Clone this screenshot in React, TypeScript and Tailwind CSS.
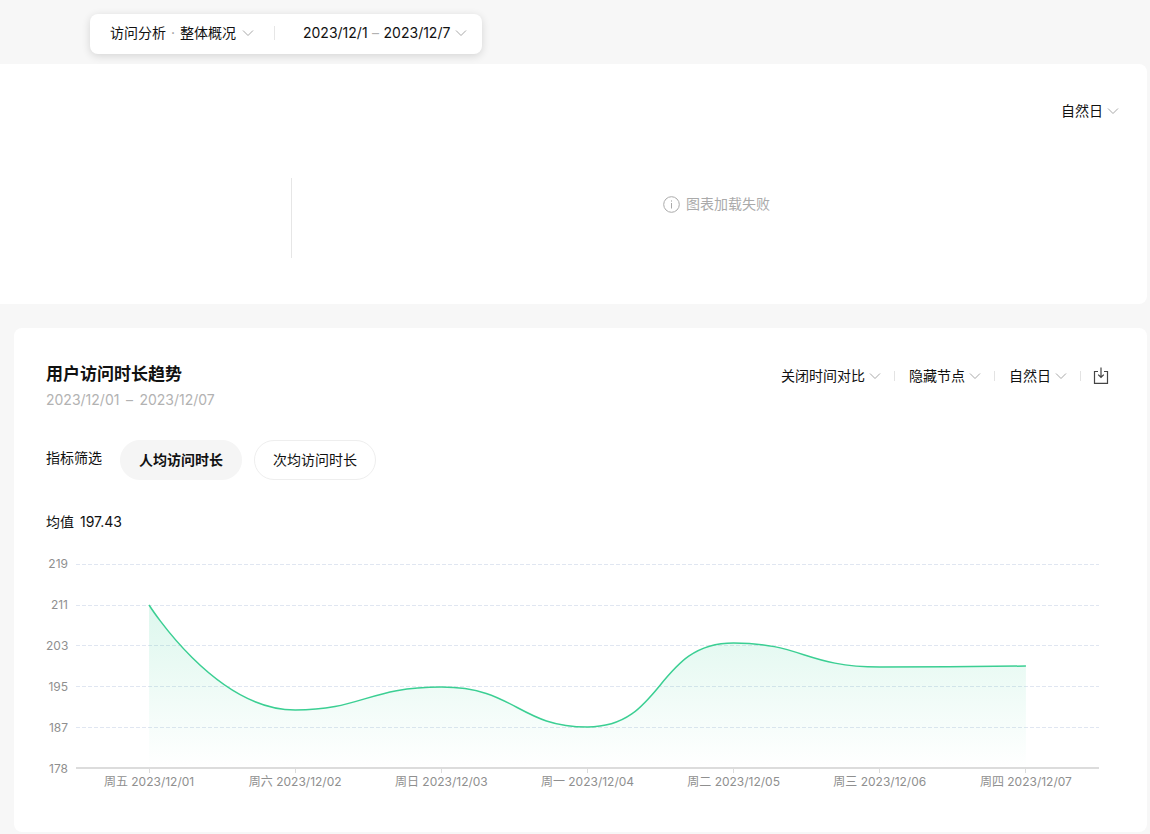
import { useState } from 'react';

const PLOT_WIDTH = 1023;
const PLOT_HEIGHT = 210;
const BASELINE = 204;

const yTicks = [219, 211, 203, 195, 187, 178];
const gridLines = [0, 41, 81, 122, 163];

const series = [
  { day: '周五 2023/12/01', y: 41 },
  { day: '周六 2023/12/02', y: 146 },
  { day: '周日 2023/12/03', y: 123 },
  { day: '周一 2023/12/04', y: 163 },
  { day: '周二 2023/12/05', y: 79 },
  { day: '周三 2023/12/06', y: 103 },
  { day: '周四 2023/12/07', y: 102 },
];

const step = PLOT_WIDTH / series.length;
const points = series.map((item, i) => ({ x: step * (i + 0.5), y: item.y }));

// Handles stay horizontal at every point, so the curve never overshoots the data
function buildLine() {
  const lengths = points.slice(1).map((p, i) => Math.hypot(p.x - points[i].x, p.y - points[i].y));
  let path = `M${points[0].x} ${points[0].y}`;
  for (let i = 1; i < points.length; i++) {
    const from = points[i - 1];
    const to = points[i];
    const out = i === 1 ? 0 : (step * lengths[i - 1]) / (lengths[i - 2] + lengths[i - 1]);
    const into = i === points.length - 1 ? 0 : (step * lengths[i - 1]) / (lengths[i - 1] + lengths[i]);
    path += ` C${from.x + out} ${from.y} ${to.x - into} ${to.y} ${to.x} ${to.y}`;
  }
  return path;
}

const linePath = buildLine();
const areaPath = `${linePath} V${BASELINE} H${points[0].x} Z`;

function Chevron() {
  return (
    <svg className="w-3 h-2 shrink-0 pointer-events-none text-[#a8a8a8]" viewBox="0 0 12 8" fill="none" stroke="currentColor" aria-hidden="true">
      <path d="M1 1.5l5 5 5-5" />
    </svg>
  );
}

function Divider() {
  return <span className="-ml-px w-px h-2.5 bg-[#e3e3e3]" />;
}

type DropdownProps = {
  label: string;
  options: string[];
};

function Dropdown({ label, options }: DropdownProps) {
  return (
    <label className="flex items-center gap-1">
      <select aria-label={label} className="appearance-none bg-transparent text-sm leading-5 outline-none cursor-pointer">
        {options.map((option) => (
          <option key={option}>{option}</option>
        ))}
      </select>
      <Chevron />
    </label>
  );
}

function Toolbar() {
  return (
    <header className="flex h-16 items-center pl-[90px] pt-1">
      <div className="flex h-10 items-center rounded-lg bg-white pl-5 pr-[15px] pb-0.5 text-sm leading-5 shadow-[0_2px_8px_rgba(0,0,0,0.14)]">
        <button type="button" className="flex items-center cursor-pointer">
          <span>访问分析</span>
          <span className="w-3.5 text-center text-[#999999]">·</span>
          <span className="mr-1.5">整体概况</span>
          <Chevron />
        </button>
        <span className="ml-5 mr-7 w-px h-3.5 bg-[#e6e6e6]" />
        <button type="button" className="flex items-center cursor-pointer">
          <span>2023/12/1</span>
          <span className="w-4 text-center text-[#b2b2b2]">–</span>
          <span className="mr-[5px]">2023/12/7</span>
          <Chevron />
        </button>
      </div>
    </header>
  );
}

function OverviewCard() {
  return (
    <section className="h-60 rounded-r-lg bg-white pt-[37px]">
      <div className="flex justify-end pr-7">
        <Dropdown label="时间粒度" options={['自然日', '自然周', '自然月']} />
      </div>
      <div className="mt-[57px] flex h-20">
        <div className="w-[292px] border-r border-[#e6e6e6]" />
        <div className="flex flex-1 justify-center pr-1.5 pt-4 text-sm leading-5 text-[#aaaaaa]">
          <p className="flex h-5 items-center gap-1.5">
            <svg className="w-[17px] h-[17px] mt-px" viewBox="0 0 17 17" fill="none" stroke="currentColor" aria-hidden="true">
              <circle cx="8.5" cy="8.5" r="7.8" />
              <path d="M8.5 7v5.5M8.5 4.4v1.2" />
            </svg>
            图表加载失败
          </p>
        </div>
      </div>
    </section>
  );
}

function TrendChart() {
  return (
    <div className="mt-6 flex pr-4">
      {/* Y axis */}
      <div className="flex h-[221px] w-[22px] shrink-0 flex-col justify-between text-right text-xs leading-4 text-[#8f8f8f]">
        {yTicks.map((tick) => (
          <span key={tick}>{tick}</span>
        ))}
      </div>

      <div className="ml-2 flex-1 pt-2">
        <svg
          className="block w-full h-[210px]"
          viewBox={`0 0 ${PLOT_WIDTH} ${PLOT_HEIGHT}`}
          preserveAspectRatio="none"
          fill="none"
          role="img"
          aria-label="用户访问时长趋势"
        >
          <defs>
            <linearGradient id="area" x1="0" y1="0" x2="0" y2="1">
              <stop offset="0" stopColor="#2bce91" stopOpacity="0.16" />
              <stop offset="1" stopColor="#2bce91" stopOpacity="0" />
            </linearGradient>
          </defs>
          {gridLines.map((y) => (
            <path key={y} d={`M0 ${y + 0.5}H${PLOT_WIDTH}`} stroke="#e0e6f1" strokeDasharray="4 2" vectorEffect="non-scaling-stroke" />
          ))}
          <path d={areaPath} fill="url(#area)" />
          <path d={`M0 ${BASELINE}H${PLOT_WIDTH}`} stroke="#dcdcdc" strokeWidth="2" vectorEffect="non-scaling-stroke" />
          {points.map((p) => (
            <path key={p.x} d={`M${Math.floor(p.x) + 0.5} ${BASELINE}v5`} stroke="#dcdcdc" vectorEffect="non-scaling-stroke" />
          ))}
          <path d={linePath} stroke="#3bcf93" strokeWidth="1.5" vectorEffect="non-scaling-stroke" />
        </svg>
        <div className="grid grid-cols-7 text-center text-xs leading-4 text-[#8f8f8f]">
          {series.map((item) => (
            <span key={item.day}>{item.day}</span>
          ))}
        </div>
      </div>
    </div>
  );
}

const metrics = ['人均访问时长', '次均访问时长'];

function TrendCard() {
  const [metric, setMetric] = useState(metrics[0]);

  return (
    <section className="ml-3.5 mt-6 h-[504px] rounded-lg bg-white px-8 pt-8">
      <div className="flex items-start justify-between">
        <div>
          <h2 className="text-[17px] leading-7 font-semibold">用户访问时长趋势</h2>
          <p className="flex text-sm leading-6 text-[#b2b2b2]">
            <span>2023/12/01</span>
            <span className="w-5 text-center">–</span>
            <span>2023/12/07</span>
          </p>
        </div>
        <div className="flex items-center gap-3.5 pr-1.5 pt-1.5">
          <Dropdown label="时间对比" options={['关闭时间对比', '开启时间对比']} />
          <Divider />
          <Dropdown label="节点" options={['隐藏节点', '显示节点']} />
          <Divider />
          <Dropdown label="时间粒度" options={['自然日', '自然周', '自然月']} />
          <Divider />
          <button type="button" aria-label="下载" className="-ml-0.5 cursor-pointer">
            <svg className="w-4 h-[18px]" viewBox="0 0 16 18" fill="none" stroke="#444444" strokeWidth="1.2" aria-hidden="true">
              <path d="M5 4.5H1.5v11.9h13V4.5H11M8 .5v9.5M5.2 7.6L8 10.3l2.8-2.7" />
            </svg>
          </button>
        </div>
      </div>

      {/* Metric filter */}
      <div className="mt-7 flex items-center text-sm leading-5">
        <span className="mr-[18px] pb-1">指标筛选</span>
        <div className="flex gap-3">
          {metrics.map((name) => (
            <button
              key={name}
              type="button"
              aria-pressed={metric === name}
              onClick={() => setMetric(name)}
              className={
                metric === name
                  ? 'h-10 rounded-full border border-[#f5f5f5] bg-[#f5f5f5] px-[18px] font-semibold cursor-pointer'
                  : 'h-10 rounded-full border border-[#eeeeee] bg-white px-[18px] cursor-pointer'
              }
            >
              {name}
            </button>
          ))}
        </div>
      </div>

      <p className="mt-8 flex gap-1.5 text-sm leading-5">
        <span>均值</span>
        <span>197.43</span>
      </p>

      <TrendChart />
    </section>
  );
}

export default function App() {
  return (
    <div className="min-h-screen bg-[#f7f7f7] pr-[3px] pb-0.5 font-['Inter','Noto_Sans_CJK_SC',sans-serif] text-[#111111]">
      <Toolbar />
      <main>
        <OverviewCard />
        <TrendCard />
      </main>
    </div>
  );
}
